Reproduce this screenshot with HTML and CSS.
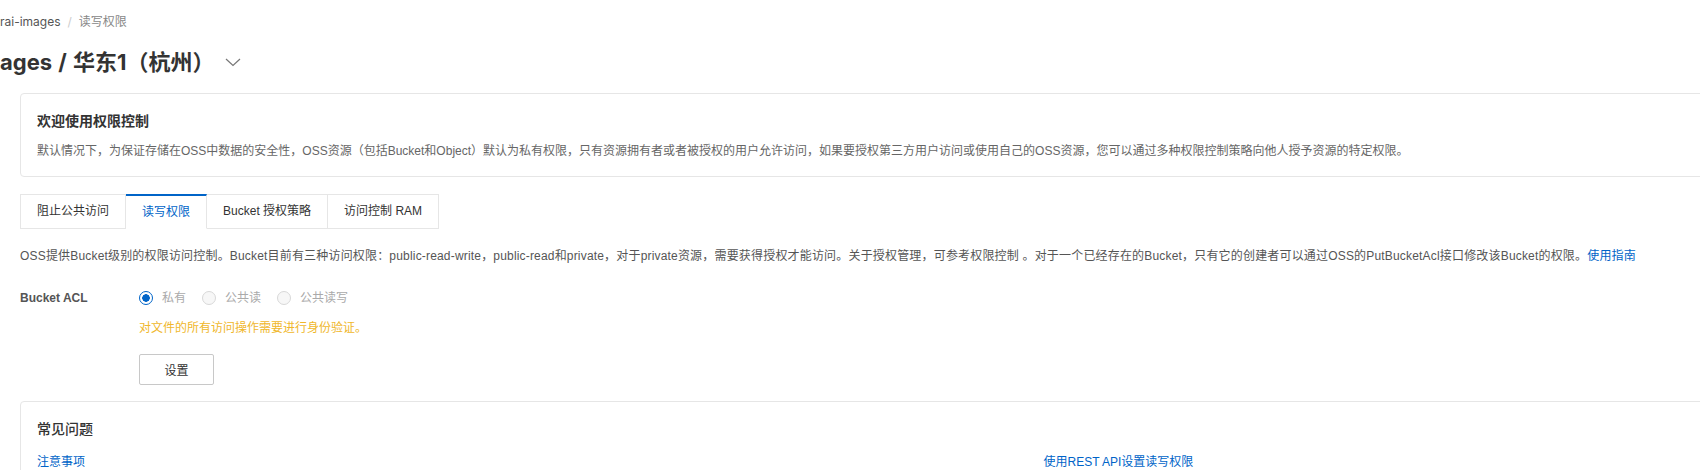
FILE: index.html
```html
<!DOCTYPE html>
<html lang="zh-CN">
<head>
<meta charset="utf-8">
<title>读写权限</title>
<link rel="stylesheet" href="styles.css">
</head>
<body>
<div class="page">
  <div class="header">
    <div class="breadcrumb"><span class="crumb">rai-images</span><span class="sep">/</span><span class="crumb current">读写权限</span></div>
    <div class="title-row">
      <h1 class="title">ages / 华东1（杭州）</h1>
      <svg class="chevron" width="18" height="18" viewBox="0 0 18 18"><path d="M2 6 L9 12.5 L16 6" fill="none" stroke="#777" stroke-width="1.2"/></svg>
    </div>
  </div>
  <div class="content">
    <div class="card intro">
      <div class="card-title">欢迎使用权限控制</div>
      <div class="card-desc">默认情况下，为保证存储在OSS中数据的安全性，OSS资源（包括Bucket和Object）默认为私有权限，只有资源拥有者或者被授权的用户允许访问，如果要授权第三方用户访问或使用自己的OSS资源，您可以通过多种权限控制策略向他人授予资源的特定权限。</div>
    </div>
    <div class="tabs">
      <div class="tab">阻止公共访问</div>
      <div class="tab active">读写权限</div>
      <div class="tab">Bucket 授权策略</div>
      <div class="tab">访问控制 RAM</div>
    </div>
    <p class="desc">OSS提供Bucket级别的权限访问控制。Bucket目前有三种访问权限：public-read-write，public-read和private，对于private资源，需要获得授权才能访问。关于授权管理，可参考权限控制 。对于一个已经存在的Bucket，只有它的创建者可以通过OSS的PutBucketAcl接口修改该Bucket的权限。<a class="link">使用指南</a></p>
    <div class="form-row">
      <div class="label">Bucket ACL</div>
      <div class="field">
        <div class="radios">
          <span class="radio"><span class="dot checked"></span>私有</span>
          <span class="radio"><span class="dot"></span>公共读</span>
          <span class="radio"><span class="dot"></span>公共读写</span>
        </div>
        <div class="warn">对文件的所有访问操作需要进行身份验证。</div>
        <button class="btn">设置</button>
      </div>
    </div>
    <div class="card faq">
      <div class="card-title normal">常见问题</div>
      <div class="faq-grid">
        <a class="link">注意事项</a>
        <a class="link">使用REST API设置读写权限</a>
      </div>
    </div>
  </div>
</div>
</body>
</html>
```
FILE: styles.css
```css
html, body {
  margin: 0;
  padding: 0;
  background: #fff;
  overflow: hidden;
}
body {
  font-family: "Liberation Sans", "Noto Sans CJK SC", sans-serif;
  color: #333;
  font-size: 12px;
}
.page {
  width: 2067px;
}
.header {
  padding-top: 12px;
}
.breadcrumb {
  font-family: "Inter", "Noto Sans CJK SC", sans-serif;
  font-size: 12px;
  line-height: 20px;
  height: 20px;
  color: #555;
}
.sep {
  color: #ccc;
  margin: 0 7px;
}
.crumb.current {
  color: #888;
}
.title-row {
  display: flex;
  align-items: center;
  margin-top: 14px;
  height: 32px;
}
.title {
  margin: 0;
  font-family: "Inter", "Noto Sans CJK SC", sans-serif;
  font-size: 22px;
  font-weight: 700;
  line-height: 32px;
  color: #333;
  word-spacing: 1px;
}
.chevron {
  margin-left: 9px;
}
.content {
  padding: 15px 0 0 20px;
}
.card {
  border: 1px solid #e6e6e6;
  border-radius: 4px;
  background: #fff;
}
.intro {
  padding: 17px 16px 16px;
  height: 49px;
}
.card-title {
  font-size: 14px;
  font-weight: 700;
  line-height: 20px;
  color: #333;
}
.card-title.normal {
  font-weight: 500;
}
.card-desc {
  margin-top: 11px;
  line-height: 18px;
  color: #666;
}
.tabs {
  display: flex;
  margin-top: 17px;
  height: 35px;
}
.tab {
  box-sizing: border-box;
  height: 35px;
  padding: 0 16px;
  line-height: 33px;
  border: 1px solid #e6e6e6;
  border-left: none;
  background: #fff;
  color: #333;
}
.tab:first-child {
  border-left: 1px solid #e6e6e6;
}
.tab.active {
  border-top: 2px solid #0064c8;
  border-bottom-color: #fff;
  line-height: 32px;
  color: #0064c8;
}
.desc {
  margin: 17px 0 0;
  line-height: 20px;
  color: #555;
  letter-spacing: 0.18px;
}
.link {
  color: #0064c8;
  text-decoration: none;
}
.form-row {
  display: flex;
  margin-top: 22px;
}
.label {
  width: 119px;
  font-weight: 700;
  line-height: 20px;
  color: #555;
}
.radios {
  display: flex;
  gap: 16px;
  line-height: 20px;
  color: #aaa;
}
.radio {
  display: flex;
  align-items: center;
}
.dot {
  box-sizing: border-box;
  width: 14px;
  height: 14px;
  border-radius: 50%;
  border: 1px solid #d8d8d8;
  background: #f7f7f7;
  margin-right: 9px;
}
.dot.checked {
  border: 1px solid #0064c8;
  background: radial-gradient(circle, #0064c8 0 3.5px, #fff 4px);
}
.warn {
  margin-top: 10px;
  line-height: 20px;
  color: #f0b72b;
}
.btn {
  display: block;
  margin-top: 16px;
  width: 75px;
  height: 31px;
  border: 1px solid #c8c8c8;
  border-radius: 2px;
  background: #fff;
  color: #333;
  font-family: inherit;
  font-size: 12px;
}
.faq {
  margin-top: 16px;
  padding: 17px 16px 0;
  height: 80px;
}
.faq-grid {
  display: grid;
  grid-template-columns: 1fr 1fr;
  margin-top: 13px;
  line-height: 20px;
}
```
